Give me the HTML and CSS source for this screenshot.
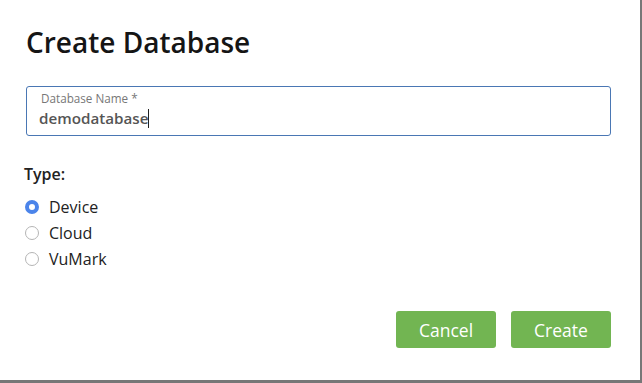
FILE: index.html
```html
<!DOCTYPE html>
<html lang="en">
<head>
    <meta charset="UTF-8">
    <title>Create Database</title>
    <link rel="stylesheet" href="styles.css">
</head>
<body>
    <div class="dialog">
        <h1>Create Database</h1>

        <div class="field">
            <label for="dbName">Database Name *</label>
            <div class="value">demodatabase<span class="caret"></span></div>
        </div>

        <div class="type-group">
            <p class="type-label">Type:</p>
            <label class="radio"><span class="dot checked"></span>Device</label>
            <label class="radio"><span class="dot"></span>Cloud</label>
            <label class="radio"><span class="dot"></span>VuMark</label>
        </div>

        <div class="actions">
            <button class="btn">Cancel</button>
            <button class="btn">Create</button>
        </div>
    </div>
</body>
</html>
```

FILE: styles.css
```css
body {
    margin: 0;
    padding: 0;
    width: 642px;
    height: 383px;
    background-color: #777;
    font-family: "Open Sans", Arial, sans-serif;
    overflow: hidden;
}

.dialog {
    box-sizing: border-box;
    width: 640px;
    height: 380px;
    background-color: #fff;
    padding: 24px 29px 0 26px;
}

h1 {
    margin: 0;
    font-size: 28px;
    font-weight: 600;
    color: #151515;
    line-height: 36px;
}

.field {
    margin-top: 26px;
    height: 50px;
    box-sizing: border-box;
    border: 1px solid #4a77b4;
    border-radius: 3px;
    padding: 3px 0 0 14px;
}

.field label {
    display: block;
    font-size: 11.7px;
    color: #777;
    line-height: 16px;
}

.value {
    font-size: 15.2px;
    font-weight: 600;
    color: #555;
    line-height: 24px;
    margin-left: -2px;
}

.caret {
    display: inline-block;
    width: 1px;
    height: 19px;
    background-color: #222;
    vertical-align: -4px;
}

.type-group {
    margin-top: 27px;
}

.type-label {
    margin: 0 0 9px;
    font-size: 16px;
    font-weight: 600;
    color: #222;
    line-height: 22px;
    margin-left: -2px;
}

.radio {
    display: flex;
    align-items: center;
    gap: 10px;
    height: 26px;
    font-size: 16px;
    color: #222;
    margin-left: -1px;
}

.dot {
    box-sizing: border-box;
    width: 14px;
    height: 14px;
    border-radius: 50%;
    border: 1px solid #b5b5b5;
    background-color: #fff;
}

.dot.checked {
    border: 4.5px solid #4b84ea;
    background-color: #fff;
}

.actions {
    display: flex;
    justify-content: flex-end;
    gap: 15px;
    margin-top: 39px;
}

.btn {
    width: 100px;
    height: 37px;
    border: none;
    border-radius: 3px;
    background-color: #72b552;
    color: #fff;
    font-family: "Open Sans", Arial, sans-serif;
    font-size: 17.5px;
    cursor: pointer;
}
```
